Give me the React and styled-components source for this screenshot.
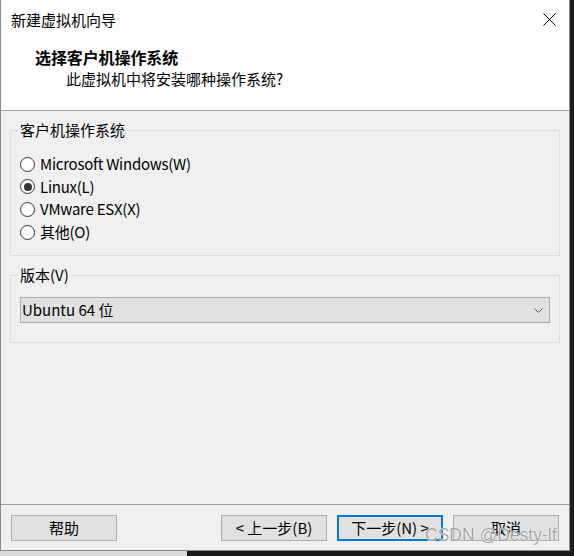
import React from 'react'
import styled, { createGlobalStyle } from 'styled-components'

const GlobalStyle = createGlobalStyle`
  html, body {
    margin: 0;
    padding: 0;
    background: #1c1c1c;
  }
  * { box-sizing: border-box; }
`

const Screen = styled.div`
  position: relative;
  width: 574px;
  height: 556px;
  overflow: hidden;
  background: #1c1c1c;
  display: flex;
  flex-direction: column;
  font-family: "Noto Sans CJK SC", "Noto Sans", sans-serif;
  font-size: 15px;
  color: #000;
`

const Window = styled.div`
  width: 570px;
  height: 551px;
  display: flex;
  flex-direction: column;
  background: #f0f0f0;
  border: 1px solid #8c8c8c;
  border-top: none;
`

const BottomStrip = styled.div`
  width: 187px;
  height: 5px;
  background: #dadada;
`

const Header = styled.div`
  height: 111px;
  background: #fff;
  border-bottom: 1px solid #a0a0a0;
  display: flex;
  flex-direction: column;
`

const TitleBar = styled.div`
  height: 39px;
  display: flex;
  align-items: center;
  justify-content: space-between;
  padding: 0 13px 0 10px;
  line-height: 20px;
`

const CloseIcon = styled.svg`
  width: 13px;
  height: 13px;
  display: block;
`

const Heading = styled.div`
  margin: 8px 0 0 34px;
  font-size: 16px;
  font-weight: 700;
  line-height: 20px;
  letter-spacing: -0.1px;
`

const Subtitle = styled.div`
  margin: 2px 0 0 65px;
  line-height: 20px;
`

const Body = styled.div`
  flex: 1;
  padding: 0 9px;
  display: flex;
  flex-direction: column;
`

const Group = styled.fieldset`
  margin: ${p => p.$top}px 0 0;
  padding: ${p => p.$pt}px 9px ${p => p.$pb}px 7px;
  border: 1px solid #dcdcdc;
  min-width: 0;
`

const Legend = styled.legend`
  padding: 0 2px;
  line-height: 20px;
`

const RadioRow = styled.label`
  height: 22.6px;
  display: flex;
  align-items: center;
  gap: 5px;
  padding-left: 2px;
  line-height: 20px;
  letter-spacing: -0.25px;
`

const RadioCircle = styled.span`
  width: 15px;
  height: 15px;
  flex: none;
  border-radius: 50%;
  border: 1px solid #333;
  background: #fff;
  display: flex;
  align-items: center;
  justify-content: center;

  &::after {
    content: '';
    width: 8px;
    height: 8px;
    border-radius: 50%;
    background: ${p => (p.$checked ? '#333' : 'transparent')};
  }
`

const Combo = styled.div`
  margin-left: 2px;
  height: 26px;
  background: #e1e1e1;
  border: 1px solid #adadad;
  display: flex;
  align-items: center;
  justify-content: space-between;
  padding: 0 6px 0 1px;
  line-height: 20px;
`

const Chevron = styled.svg`
  width: 9px;
  height: 5px;
  display: block;
`

const Footer = styled.div`
  border-top: 1px solid #a0a0a0;
  padding: 10px 10px 9px;
  display: flex;
  gap: 10px;
`

const Button = styled.div`
  width: 106px;
  height: 26px;
  background: #e1e1e1;
  border: ${p => (p.$default ? '2px solid #0078d7' : '1px solid #adadad')};
  display: flex;
  align-items: center;
  justify-content: center;
  line-height: 20px;
  margin-right: ${p => (p.$push ? 'auto' : '0')};
`

// CSDN watermark burned into the screenshot
const Watermark = styled.div`
  position: absolute;
  left: 425px;
  top: 523px;
  font-family: "Liberation Sans", Arial, sans-serif;
  font-size: 17.5px;
  line-height: 24px;
  color: rgba(140, 140, 140, 0.8);
  text-shadow: 0 0 1px #fff, 0 0 1px #fff;
  pointer-events: none;
  white-space: nowrap;
`

const osOptions = [
  { label: 'Microsoft Windows(W)', checked: false },
  { label: 'Linux(L)', checked: true },
  { label: 'VMware ESX(X)', checked: false },
  { label: '其他(O)', checked: false }
]

const App = () => (
  <>
    <GlobalStyle />
    <Screen>
      <Window>
        <Header>
          <TitleBar>
            <span>新建虚拟机向导</span>
            <CloseIcon viewBox="0 0 13 13">
              <path d="M0.5 0.5 L12.5 12.5 M12.5 0.5 L0.5 12.5" stroke="#000" strokeWidth="1" fill="none" />
            </CloseIcon>
          </TitleBar>
          <Heading>选择客户机操作系统</Heading>
          <Subtitle>此虚拟机中将安装哪种操作系统?</Subtitle>
        </Header>
        <Body>
          <Group $top={9} $pt={13} $pb={12}>
            <Legend>客户机操作系统</Legend>
            {osOptions.map(o => (
              <RadioRow key={o.label}>
                <RadioCircle $checked={o.checked} />
                {o.label}
              </RadioRow>
            ))}
          </Group>
          <Group $top={9} $pt={12} $pb={19}>
            <Legend>版本(V)</Legend>
            <Combo>
              <span>Ubuntu 64 位</span>
              <Chevron viewBox="0 0 9 5">
                <path d="M0.5 0.5 L4.5 4.5 L8.5 0.5" stroke="#606060" strokeWidth="1" fill="none" />
              </Chevron>
            </Combo>
          </Group>
        </Body>
        <Footer>
          <Button $push>帮助</Button>
          <Button>&lt; 上一步(B)</Button>
          <Button $default>下一步(N) &gt;</Button>
          <Button>取消</Button>
        </Footer>
      </Window>
      <BottomStrip />
      <Watermark>CSDN @Desty-lf</Watermark>
    </Screen>
  </>
)

export default App
